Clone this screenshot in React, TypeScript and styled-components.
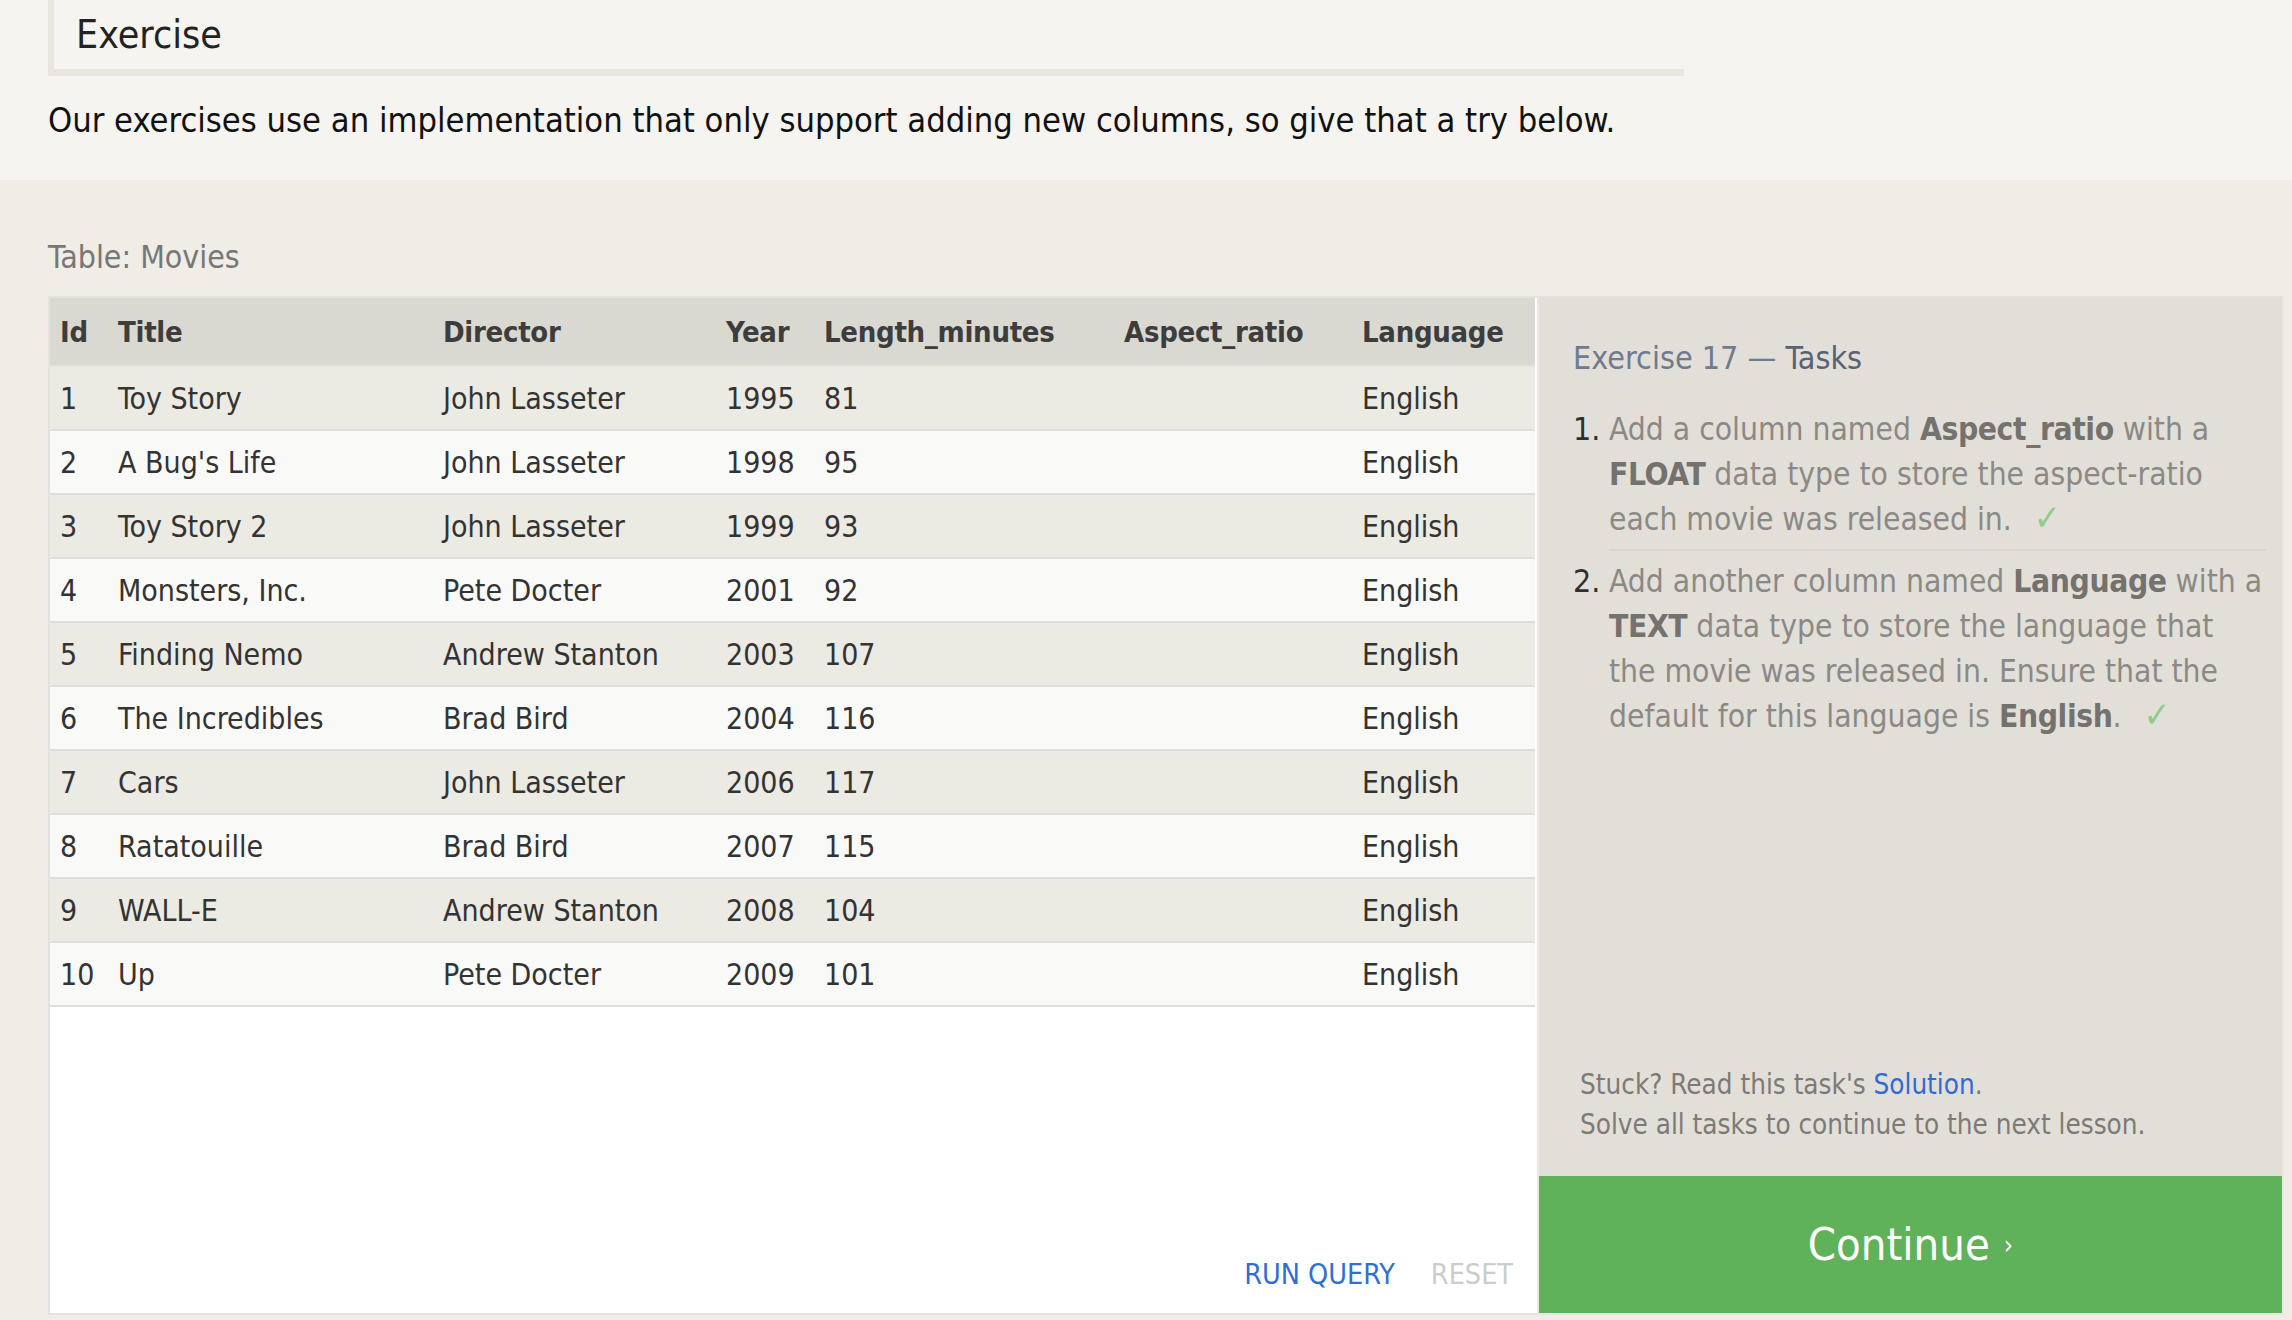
import React from "react";
import styled, { createGlobalStyle } from "styled-components";

const font = `"DejaVu Sans Condensed", "Liberation Sans Narrow", "DejaVu Sans", sans-serif`;

const GlobalStyle = createGlobalStyle`
	html, body {
		margin: 0;
		padding: 0;
		background: #efede6;
	}
	body {
		font-family: ${font};
		font-stretch: condensed;
		color: #333;
	}
	* {
		box-sizing: border-box;
	}
`;

type Movie = {
	id: number;
	title: string;
	director: string;
	year: number;
	length: number;
};

const movies: Movie[] = [
	{ id: 1, title: "Toy Story", director: "John Lasseter", year: 1995, length: 81 },
	{ id: 2, title: "A Bug's Life", director: "John Lasseter", year: 1998, length: 95 },
	{ id: 3, title: "Toy Story 2", director: "John Lasseter", year: 1999, length: 93 },
	{ id: 4, title: "Monsters, Inc.", director: "Pete Docter", year: 2001, length: 92 },
	{ id: 5, title: "Finding Nemo", director: "Andrew Stanton", year: 2003, length: 107 },
	{ id: 6, title: "The Incredibles", director: "Brad Bird", year: 2004, length: 116 },
	{ id: 7, title: "Cars", director: "John Lasseter", year: 2006, length: 117 },
	{ id: 8, title: "Ratatouille", director: "Brad Bird", year: 2007, length: 115 },
	{ id: 9, title: "WALL-E", director: "Andrew Stanton", year: 2008, length: 104 },
	{ id: 10, title: "Up", director: "Pete Docter", year: 2009, length: 101 },
];

const columns = [
	{ name: "Id", width: 58 },
	{ name: "Title", width: 325 },
	{ name: "Director", width: 283 },
	{ name: "Year", width: 98 },
	{ name: "Length_minutes", width: 300 },
	{ name: "Aspect_ratio", width: 238 },
	{ name: "Language", width: 183 },
];

const App: React.FC = () => {
	return (
		<>
			<GlobalStyle />
			<Intro>
				<Heading>Exercise</Heading>
				<Lead>
					Our exercises use an implementation that only support adding new columns, so give that a try
					below.
				</Lead>
			</Intro>
			<Lesson>
				<TableLabel>Table: Movies</TableLabel>
				<Workspace>
					<TablePanel>
						<Table>
							<colgroup>
								{columns.map((c) => (
									<col key={c.name} style={{ width: c.width }} />
								))}
							</colgroup>
							<thead>
								<HeadRow>
									{columns.map((c) => (
										<HeadCell key={c.name}>{c.name}</HeadCell>
									))}
								</HeadRow>
							</thead>
							<tbody>
								{movies.map((m, i) => (
									<Row key={m.id} $odd={i % 2 === 0}>
										<Cell>{m.id}</Cell>
										<Cell>{m.title}</Cell>
										<Cell>{m.director}</Cell>
										<Cell>{m.year}</Cell>
										<Cell>{m.length}</Cell>
										<Cell />
										<Cell>English</Cell>
									</Row>
								))}
							</tbody>
						</Table>
						<Actions>
							<ActionLink $muted={false}>RUN QUERY</ActionLink>
							<ActionLink $muted>RESET</ActionLink>
						</Actions>
					</TablePanel>
					<TaskPanel>
						<TaskBody>
							<TaskTitle>
								Exercise 17 — <strong>Tasks</strong>
							</TaskTitle>
							<TaskList>
								<TaskItem>
									<TaskNumber>1.</TaskNumber>
									<TaskText>
										Add a column named <b>Aspect_ratio</b> with a
										<br />
										<b>FLOAT</b> data type to store the aspect-ratio
										<br />
										each movie was released in.
										<Check>✓</Check>
									</TaskText>
								</TaskItem>
								<TaskItem>
									<TaskNumber>2.</TaskNumber>
									<TaskText>
										Add another column named <b>Language</b> with a
										<br />
										<b>TEXT</b> data type to store the language that
										<br />
										the movie was released in. Ensure that the
										<br />
										default for this language is <b>English</b>.
										<Check>✓</Check>
									</TaskText>
								</TaskItem>
							</TaskList>
						</TaskBody>
						<Hint>
							Stuck? Read this task's <HintLink>Solution</HintLink>.
							<br />
							Solve all tasks to continue to the next lesson.
						</Hint>
						<ContinueButton>
							Continue<Chevron>›</Chevron>
						</ContinueButton>
					</TaskPanel>
				</Workspace>
			</Lesson>
		</>
	);
};

const Intro = styled.section`
	background: #f5f4f0;
	height: 180px;
	padding: 0 48px;
	overflow: hidden;
`;

const Heading = styled.h2`
	margin: 0;
	width: 1636px;
	height: 76px;
	padding-left: 22px;
	border-left: 6px solid #e8e6df;
	border-bottom: 7px solid #e8e6df;
	font-size: 39px;
	font-weight: normal;
	line-height: 69px;
	color: #222;
`;

const Lead = styled.p`
	margin: 22px 0 0;
	font-size: 34.2px;
	line-height: 44px;
	color: #111;
	white-space: nowrap;
`;

const Lesson = styled.section`
	padding: 57px 8px 0 48px;
`;

const TableLabel = styled.div`
	font-size: 31.8px;
	line-height: 40px;
	color: #777;
	margin-bottom: 19px;
`;

const Workspace = styled.div`
	display: flex;
	height: 1019px;
`;

const TablePanel = styled.div`
	width: 1489px;
	flex: none;
	display: flex;
	flex-direction: column;
	background: #fff;
	border: 2px solid #e4e2dc;
	border-right: none;
`;

const Table = styled.table`
	width: 1485px;
	table-layout: fixed;
	border-collapse: collapse;
	font-size: 30px;
`;

const HeadRow = styled.tr`
	height: 68px;
	background: #dad9d1;
	border-bottom: 2px solid #e4e2dc;
`;

const HeadCell = styled.th`
	padding: 0 0 0 10px;
	text-align: left;
	font-size: 29px;
	font-weight: bold;
	letter-spacing: -0.3px;
	color: #3d3d3d;
	white-space: nowrap;
`;

const Row = styled.tr<{ $odd: boolean }>`
	height: 64px;
	background: ${(p) => (p.$odd ? "#ebeae3" : "#f9f9f8")};
	border-bottom: 2px solid #e0ded8;
`;

const Cell = styled.td`
	padding: 0 0 0 10px;
	color: #333;
	white-space: nowrap;
`;

const Actions = styled.div`
	margin-top: auto;
	display: flex;
	justify-content: flex-end;
	gap: 36px;
	padding: 0 24px 20px 0;
`;

const ActionLink = styled.span<{ $muted: boolean }>`
	font-size: 28.5px;
	line-height: 36px;
	color: ${(p) => (p.$muted ? "#cccccc" : "#2e6fd6")};
	cursor: pointer;
`;

const TaskPanel = styled.aside`
	width: 747px;
	flex: none;
	display: flex;
	flex-direction: column;
	background: #e2dfd8;
	border: 2px solid #e9e7e0;
	border-top-color: #e4e2dc;
`;

const TaskBody = styled.div`
	flex: 1;
	padding: 38px 16px 0 34px;
`;

const TaskTitle = styled.h3`
	margin: 0;
	font-size: 32px;
	font-weight: normal;
	line-height: 44px;
	color: #6f7b8e;

	strong {
		font-weight: normal;
		color: #576275;
	}
`;

const TaskList = styled.ol`
	list-style: none;
	margin: 27px 0 0;
	padding: 0;
`;

const TaskItem = styled.li`
	display: flex;
	padding: 0 0 7px;

	& + & {
		padding-top: 8px;
		border-top: 2px solid #d9d6ce;
		margin-left: 36px;
	}
	& + & > span:first-child {
		margin-left: -36px;
	}
`;

const TaskNumber = styled.span`
	width: 36px;
	flex: none;
	font-size: 32px;
	line-height: 45px;
	color: #2f2f2f;
`;

const TaskText = styled.div`
	font-size: 31.5px;
	line-height: 45px;
	color: #8b8985;
	white-space: nowrap;

	b {
		color: #74726e;
		letter-spacing: -0.4px;
	}
`;

const Check = styled.span`
	display: inline-block;
	margin-left: 22px;
	font-size: 36px;
	line-height: 1;
	color: #8fcb8f;
`;

const Hint = styled.p`
	margin: 0;
	padding: 0 0 31px 41px;
	font-size: 27.6px;
	line-height: 40px;
	color: #7d7a76;
`;

const HintLink = styled.span`
	color: #2e6bd9;
	cursor: pointer;
`;

const ContinueButton = styled.div`
	height: 137px;
	display: flex;
	align-items: center;
	justify-content: center;
	background: #5fb25a;
	color: #fff;
	font-size: 45px;
	cursor: pointer;
`;

const Chevron = styled.span`
	font-size: 26px;
	margin-left: 14px;
`;

export default App;
